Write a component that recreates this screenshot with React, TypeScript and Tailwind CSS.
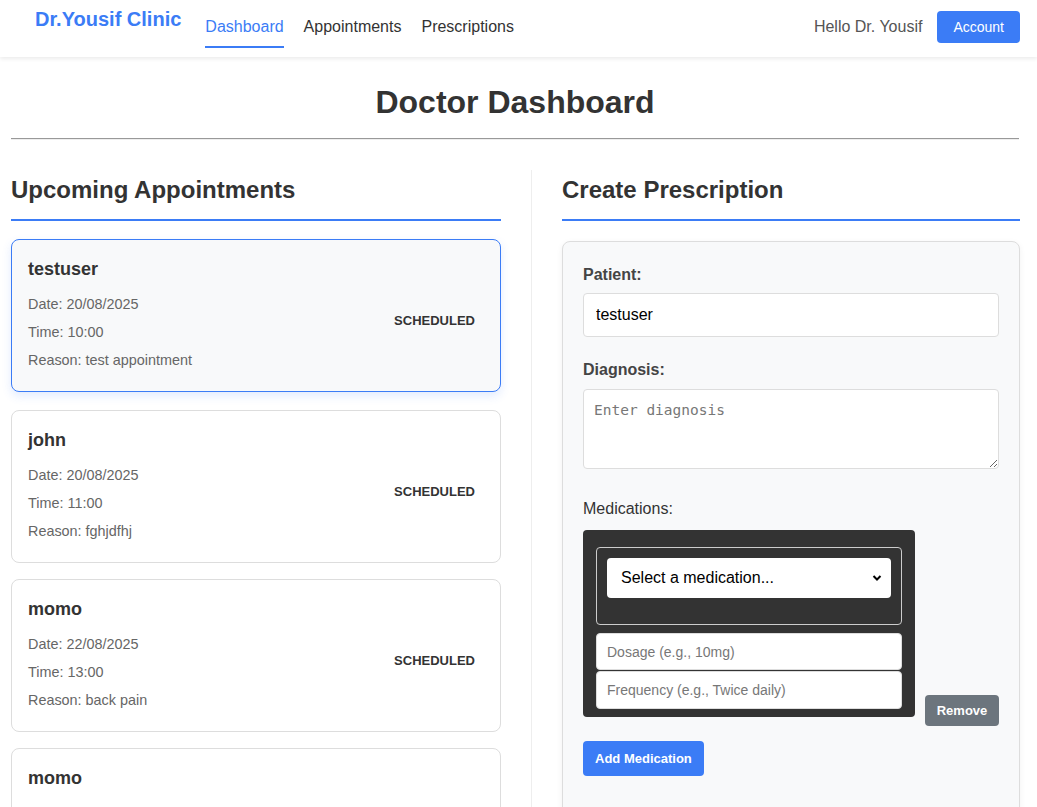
import React from "react";

// Data.
type Appointment = {
  name: string;
  date: string;
  time: string;
  reason: string;
  status: string;
};

const appointments: Appointment[] = [
  { name: "testuser", date: "20/08/2025", time: "10:00", reason: "test appointment", status: "SCHEDULED" },
  { name: "john", date: "20/08/2025", time: "11:00", reason: "fghjdfhj", status: "SCHEDULED" },
  { name: "momo", date: "22/08/2025", time: "13:00", reason: "back pain", status: "SCHEDULED" },
  { name: "momo", date: "23/08/2025", time: "09:00", reason: "checkup", status: "SCHEDULED" },
];

const Navbar = (): React.JSX.Element => {
  return (
    <header className="flex h-[57px] items-start bg-white pl-[35px] pr-[17px] shadow-[0_2px_4px_rgba(0,0,0,0.08)]">
      <div className="mt-[7px] text-[20px] font-bold leading-[24px] text-[#3b7cf6]">Dr.Yousif Clinic</div>
      <nav className="ml-[24px] flex gap-[20px] text-[16px] leading-[20px]">
        <a className="mt-[17px] border-b-2 border-[#3b7cf6] pb-[9px] text-[#3b7cf6]">Dashboard</a>
        <a className="mt-[17px] pb-[9px] text-[#333]">Appointments</a>
        <a className="mt-[17px] pb-[9px] text-[#333]">Prescriptions</a>
      </nav>
      <div className="ml-auto mt-[11px] flex items-center gap-[15px]">
        <span className="text-[16px] text-[#555]">Hello Dr. Yousif</span>
        <button className="h-[32px] rounded-[4px] bg-[#3b7cf6] px-[16px] text-[14px] text-white">Account</button>
      </div>
    </header>
  );
};

const AppointmentCard = ({ appt, active }: { appt: Appointment; active: boolean }): React.JSX.Element => {
  return (
    <div
      className={
        active
          ? "flex h-[153px] -translate-y-[2px] items-start justify-between rounded-[8px] border border-[#3b7cf6] bg-[#f8f9fa] px-4 pt-[17px] shadow-[0_4px_10px_rgba(59,124,246,0.15)]"
          : "flex h-[153px] items-start justify-between rounded-[8px] border border-[#ddd] bg-white px-4 pt-[17px]"
      }
    >
      <div>
        <h3 className="mb-[13px] text-[18px] font-bold leading-[24px] text-[#333]">{appt.name}</h3>
        <p className="mb-[8px] text-[14.4px] leading-[20px] text-[#666]">Date: {appt.date}</p>
        <p className="mb-[8px] text-[14.4px] leading-[20px] text-[#666]">Time: {appt.time}</p>
        <p className="text-[14.4px] leading-[20px] text-[#666]">Reason: {appt.reason}</p>
      </div>
      <span className="mt-[56px] px-[9px] text-[13px] font-bold leading-[16px] text-[#333]">{appt.status}</span>
    </div>
  );
};

const App = (): React.JSX.Element => {
  return (
    <div className="min-h-screen bg-white font-['Liberation_Sans',Arial,sans-serif] text-[#333]">
      <Navbar />
      <main className="ml-[11px] w-[1008px] pt-[25px]">
        <h1 className="text-center text-[32px] font-bold leading-[40px] text-[#333]">Doctor Dashboard</h1>
        <div className="mt-[16px] h-[2px] border-t border-b border-t-[#999] border-b-[#eee]" />

        <div className="mt-[30px] flex">
          {/* Appointments column. */}
          <section className="w-[490px] shrink-0">
            <h2 className="mt-[5px] border-b-2 border-[#3b7cf6] pb-[15px] text-[24px] font-bold leading-[29px] text-[#333]">
              Upcoming Appointments
            </h2>
            <div className="mt-[20px] flex flex-col gap-4">
              {appointments.map((a, i) => (
                <AppointmentCard key={i} appt={a} active={i === 0} />
              ))}
            </div>
          </section>

          {/* Prescription column. */}
          <section className="ml-[30px] flex-1 border-l border-[#eee] pl-[30px]">
            <h2 className="mt-[5px] border-b-2 border-[#3b7cf6] pb-[15px] text-[24px] font-bold leading-[29px] text-[#333]">
              Create Prescription
            </h2>
            <div className="mt-[20px] rounded-[8px] border border-[#ddd] bg-[#f8f9fa] px-[20px] pb-[80px] pt-[23px] shadow-[0_2px_6px_rgba(0,0,0,0.06)]">
              <label className="block text-[16px] font-bold leading-[20px] text-[#444]">Patient:</label>
              <input
                className="mt-[8px] block h-[44px] w-full rounded-[4px] border border-[#ddd] bg-white px-[12px] text-[16px] text-black outline-none"
                defaultValue="testuser"
              />
              <label className="mt-[23px] block text-[16px] font-bold leading-[20px] text-[#444]">Diagnosis:</label>
              <textarea
                className="mt-[9px] block h-[80px] w-full rounded-[4px] border border-[#ddd] bg-white px-[10px] py-[10px] font-['DejaVu_Sans_Mono',monospace] text-[14.5px] leading-[20px] outline-none placeholder:text-[#777]"
                placeholder="Enter diagnosis"
              />
              <label className="mt-[30px] block text-[16px] leading-[20px] text-[#333]">Medications:</label>
              <div className="mt-[11px] flex items-end gap-[10px]">
                <div className="mb-[9px] w-[332px] rounded-[4px] bg-[#333] px-[13px] pb-[8px] pt-[17px]">
                  <div className="rounded-[4px] border border-[#ccc] px-[10px] pb-[26px] pt-[10px]">
                    <div className="relative">
                      <select className="block h-[40px] w-full appearance-none rounded-[4px] bg-white px-[14px] text-[16px] text-black outline-none">
                        <option>Select a medication...</option>
                      </select>
                      <svg
                        className="pointer-events-none absolute right-[9px] top-[16px]"
                        width="10"
                        height="8"
                        viewBox="0 0 10 8"
                      >
                        <path d="M1.5 2 L5 5.5 L8.5 2" fill="none" stroke="#000" strokeWidth="2" />
                      </svg>
                    </div>
                  </div>
                  <input
                    className="mt-[8px] block h-[37px] w-full rounded-[4px] border border-[#ddd] bg-white px-[10px] text-[14px] outline-none placeholder:text-[#777]"
                    placeholder="Dosage (e.g., 10mg)"
                  />
                  <input
                    className="mt-[1px] block h-[38px] w-full rounded-[4px] border border-[#ddd] bg-white px-[10px] text-[14px] outline-none placeholder:text-[#777]"
                    placeholder="Frequency (e.g., Twice daily)"
                  />
                </div>
                <button className="h-[31px] w-[74px] rounded-[4px] bg-[#6c757d] text-[13px] font-bold text-white">
                  Remove
                </button>
              </div>
              <button className="mt-[15px] h-[35px] rounded-[4px] bg-[#3b7cf6] px-[12px] text-[13px] font-bold text-white">
                Add Medication
              </button>
            </div>
          </section>
        </div>
      </main>
    </div>
  );
};

export default App;
